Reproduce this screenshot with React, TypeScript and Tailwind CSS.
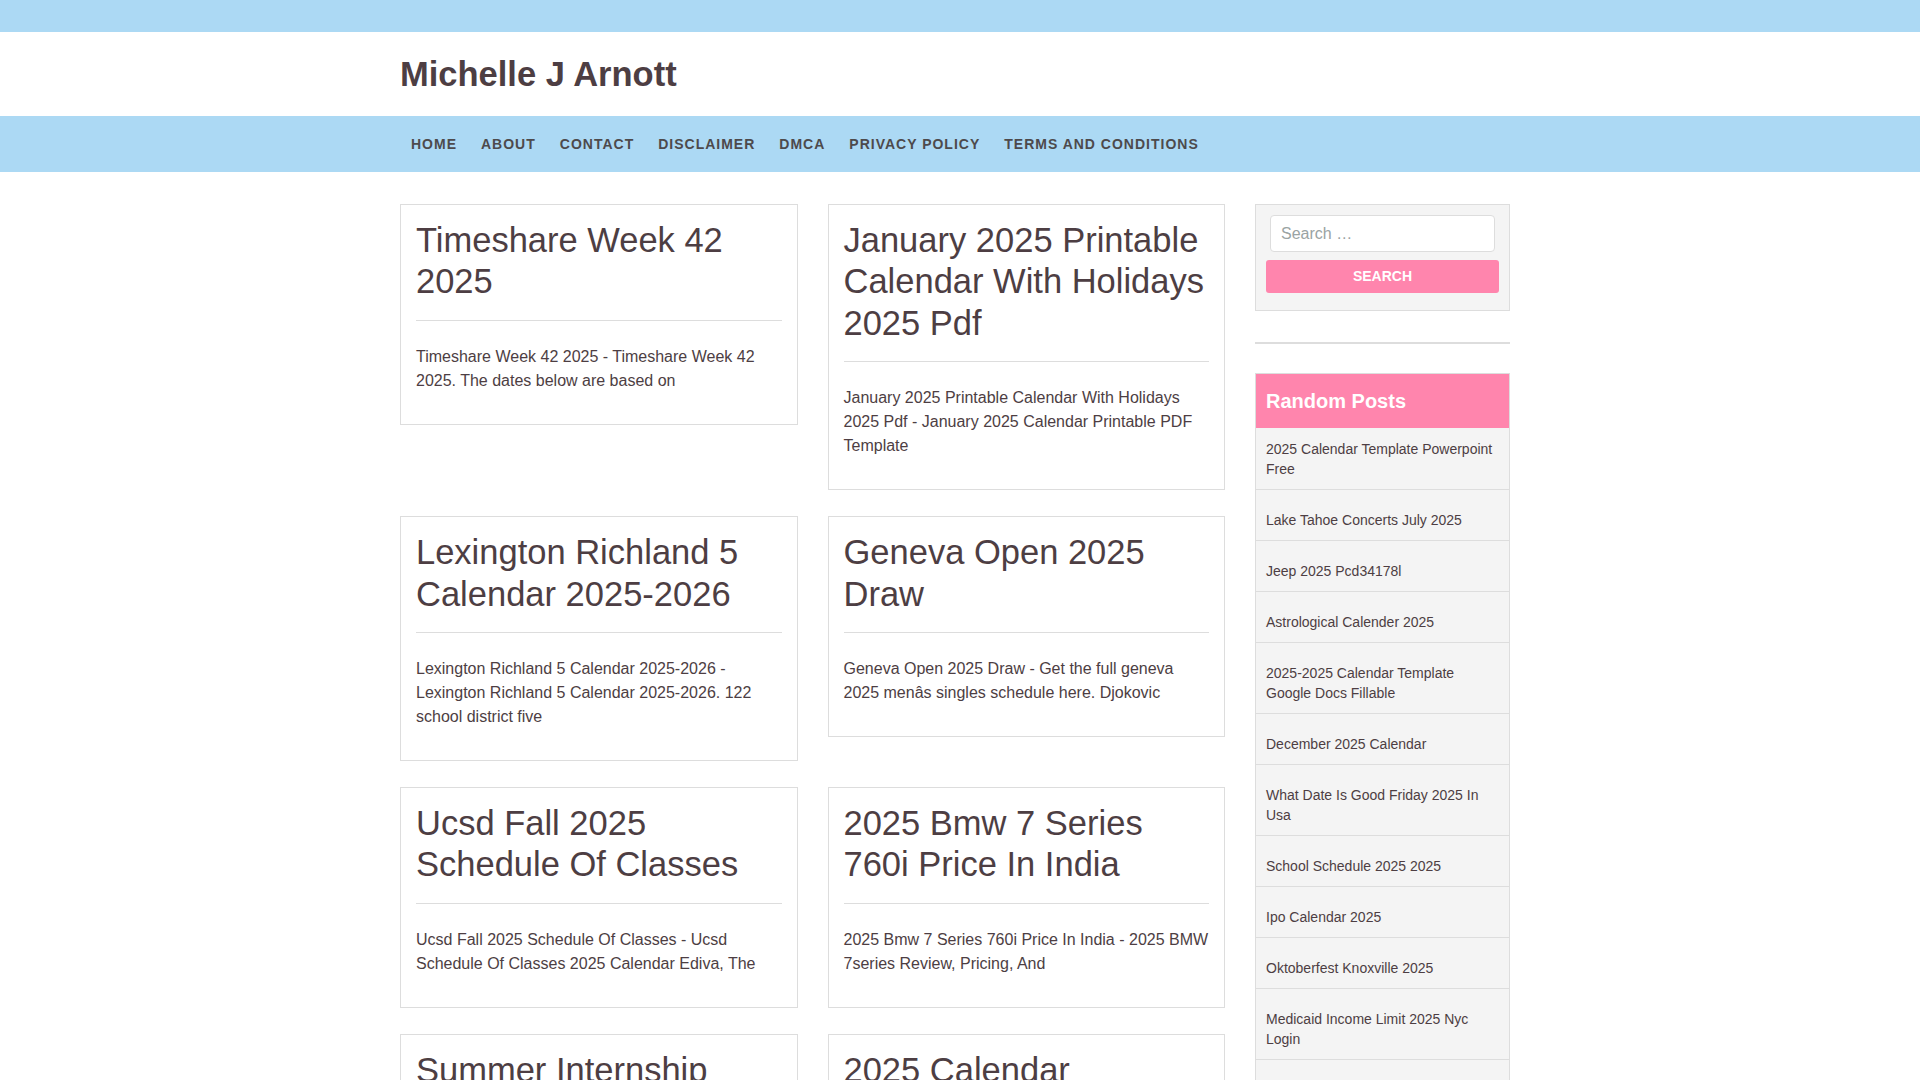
import React from "react"

const navItems = ["Home", "About", "Contact", "Disclaimer", "DMCA", "Privacy Policy", "Terms and Conditions"]

const posts = [
  {
    title: "Timeshare Week 42 2025",
    excerpt: "Timeshare Week 42 2025 - Timeshare Week 42 2025. The dates below are based on",
  },
  {
    title: "January 2025 Printable Calendar With Holidays 2025 Pdf",
    excerpt: "January 2025 Printable Calendar With Holidays 2025 Pdf - January 2025 Calendar Printable PDF Template",
  },
  {
    title: "Lexington Richland 5 Calendar 2025-2026",
    excerpt:
      "Lexington Richland 5 Calendar 2025-2026 - Lexington Richland 5 Calendar 2025-2026. 122 school district five",
  },
  {
    title: "Geneva Open 2025 Draw",
    excerpt: "Geneva Open 2025 Draw - Get the full geneva 2025 menâs singles schedule here. Djokovic",
  },
  {
    title: "Ucsd Fall 2025 Schedule Of Classes",
    excerpt: "Ucsd Fall 2025 Schedule Of Classes - Ucsd Schedule Of Classes 2025 Calendar Ediva, The",
  },
  {
    title: "2025 Bmw 7 Series 760i Price In India",
    excerpt: "2025 Bmw 7 Series 760i Price In India - 2025 BMW 7series Review, Pricing, And",
  },
  {
    title: "Summer Internship 2025 Nyc",
    excerpt: "Summer Internship 2025 Nyc - Summer Internship 2025 Nyc. Find the best programs open this year",
  },
  {
    title: "2025 Calendar Printable Free",
    excerpt: "2025 Calendar Printable Free - Download a free 2025 calendar to print at home",
  },
]

const randomPosts = [
  "2025 Calendar Template Powerpoint Free",
  "Lake Tahoe Concerts July 2025",
  "Jeep 2025 Pcd34178l",
  "Astrological Calender 2025",
  "2025-2025 Calendar Template Google Docs Fillable",
  "December 2025 Calendar",
  "What Date Is Good Friday 2025 In Usa",
  "School Schedule 2025 2025",
  "Ipo Calendar 2025",
  "Oktoberfest Knoxville 2025",
  "Medicaid Income Limit 2025 Nyc Login",
  "Printable 2025 Monthly Calendar",
]

function PostCard({ title, excerpt }: { title: string; excerpt: string }) {
  return (
    <article className="border border-[#dddddd] bg-white px-[15px] pt-[15px] pb-[15px]">
      <h2 className="text-[34.5px] leading-[1.2] font-normal text-[#4d3e43] mb-[17px]">
        <a href="#">{title}</a>
      </h2>
      <hr className="border-0 border-t border-[#dddddd] mb-[24px]" />
      <p className="text-[16px] leading-[24px] text-[#4d3e43] mb-[16px]">{excerpt}</p>
    </article>
  )
}

function Sidebar() {
  return (
    <aside className="flex flex-col">
      {/* search widget */}
      <div className="border border-[#dddddd] bg-[#f4f4f4] px-[10px] pt-[10px] pb-[17px]">
        <input
          type="search"
          placeholder="Search …"
          className="block mx-[4px] w-[calc(100%-8px)] h-[37px] rounded-[4px] border border-[#dddddd] bg-white px-[10px] text-[16px] text-[#4d3e43] placeholder:text-[#9aa3a3] outline-none mb-[8px]"
        />
        <button className="block w-full h-[33px] rounded-[3px] bg-[#ff85ad] text-white text-[14px] font-bold uppercase">
          Search
        </button>
      </div>

      <div className="mt-[31px] h-[2px] bg-[#dddddd]" />

      {/* random posts */}
      <div className="mt-[29px] border border-[#dddddd] bg-[#f4f4f4]">
        <h3 className="h-[54px] flex items-center bg-[#ff85ad] px-[10px] text-[20px] font-bold text-white">
          Random Posts
        </h3>
        <ul>
          {randomPosts.map((p, i) => (
            <li
              key={p}
              className={`border-b border-[#dddddd] px-[10px] pb-[10px] text-[14px] leading-[20px] text-[#4d3e43] ${
                i === 0 ? "pt-[11px]" : "pt-[20px]"
              }`}
            >
              <a href="#">{p}</a>
            </li>
          ))}
        </ul>
      </div>
    </aside>
  )
}

export default function App() {
  return (
    <div className="h-screen overflow-y-scroll bg-white font-['Liberation_Sans',Arial,sans-serif]">
      <div className="h-[32px] bg-[#acd9f4]" />

      <header className="h-[84px] bg-white pr-[10px]">
        <div className="mx-auto w-[1110px] h-full flex items-center">
          <h1 className="text-[34.5px] font-bold leading-none text-[#4d3e43]">
            <a href="#">Michelle J Arnott</a>
          </h1>
        </div>
      </header>

      <nav className="h-[56px] bg-[#acd9f4] pr-[10px]">
        <ul className="mx-auto w-[1110px] h-full flex items-center">
          {navItems.map((item, i) => (
            <li key={item} className={i === 0 ? "-ml-[1px]" : ""}>
              <a
                href="#"
                className="block px-[12px] text-[14px] font-bold uppercase tracking-[1px] text-[#4d4a4c]"
              >
                {item}
              </a>
            </li>
          ))}
        </ul>
      </nav>

      <div className="pr-[10px]">
        <main className="mx-auto w-[1110px] pt-[32px] pb-[40px] flex gap-[30px] items-start">
          <div className="w-[825px] grid grid-cols-2 gap-x-[30px] gap-y-[26px] items-start">
            {posts.map((p) => (
              <PostCard key={p.title} title={p.title} excerpt={p.excerpt} />
            ))}
          </div>
          <div className="w-[255px]">
            <Sidebar />
          </div>
        </main>
      </div>
    </div>
  )
}
